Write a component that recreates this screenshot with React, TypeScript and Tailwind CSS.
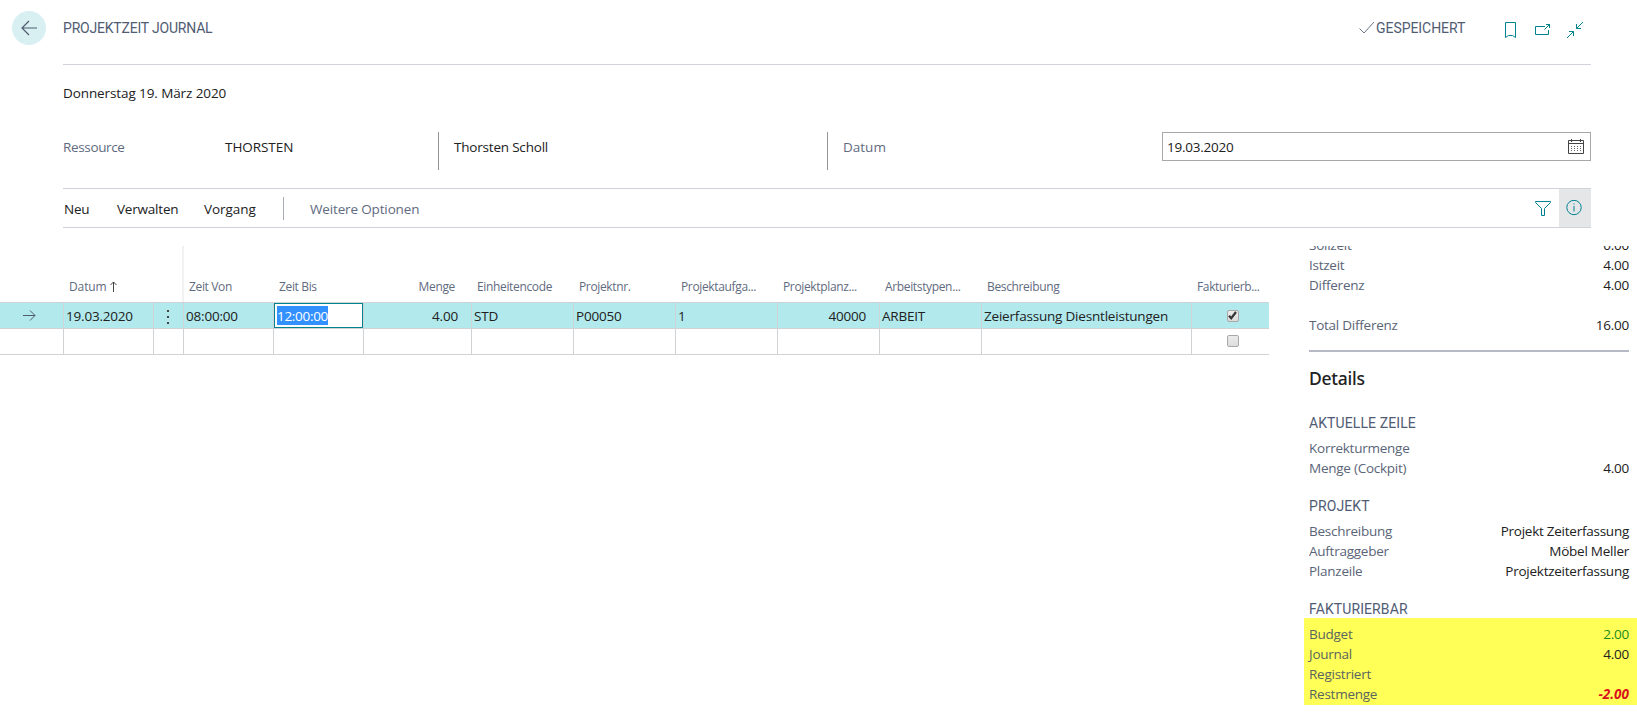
import clsx from "clsx";

const actions = [
  { t: "Neu", c: "w-[53px]" },
  { t: "Verwalten", c: "w-[87px]" },
  { t: "Vorgang", c: "w-[79px] tracking-[-0.05px]" },
];

const columns = [
  { t: "Zeit Von", v: "08:00:00", w: "w-[90px]" },
  { t: "Zeit Bis", v: "12:00:00", w: "w-[90px]", active: true },
  { t: "Menge", v: "4.00", w: "w-[108px]", right: true },
  { t: "Einheitencode", v: "STD", w: "w-[102px]" },
  { t: "Projektnr.", v: "P00050", w: "w-[102px]" },
  { t: "Projektaufga...", v: "1", w: "w-[102px]" },
  { t: "Projektplanz...", v: "40000", w: "w-[102px]", right: true },
  { t: "Arbeitstypen...", v: "ARBEIT", w: "w-[102px]" },
  { t: "Beschreibung", v: "Zeierfassung Diesntleistungen", w: "w-[210px]" },
];

function Header() {
  return (
    <header className="flex h-[65px] pl-3 pr-[46px]">
      <button className="mt-[11px] mr-[17px] flex size-[34px] shrink-0 items-center justify-center rounded-full bg-[#d9f0f2]">
        <svg width="16" height="16" viewBox="0 0 16 16" fill="none" stroke="#505c6d" strokeWidth="1.2">
          <path d="M16 8H1M8 1L1 8l7 7" />
        </svg>
      </button>
      <div className="flex grow border-b border-[#d0d3d9]">
        <h1 className="mt-[18px] font-[Roboto] text-sm leading-5 font-normal tracking-[-0.2px] text-[#505c73]">PROJEKTZEIT JOURNAL</h1>
        <div className="ml-auto flex">
          <svg className="mt-[21px]" width="16" height="14" viewBox="0 0 16 14" fill="none" stroke="#6b7587">
            <path d="M.5 7.500l4.500 4.500L15 1" />
          </svg>
          <span className="mt-[18px] ml-[1px] w-[129px] font-[Roboto] text-sm leading-5 font-normal tracking-[-0.05px] text-[#505c73]">GESPEICHERT</span>
          <svg className="mt-[22px] mr-[19px]" width="11" height="16" viewBox="0 0 11 16" fill="none" stroke="#00838f">
            <path d="M.5.5h10v15l-3-2h-4l-3 2z" />
          </svg>
          <svg className="mt-[23px] mr-[16px]" width="16" height="13" viewBox="0 0 16 13" fill="none" stroke="#00838f">
            <path d="M10 3.500H.5v8h13V7M9.500 6.500l5.500-5.500M11 1.500h3.500V5" />
          </svg>
          <svg className="mt-[22px] mr-[8px]" width="16" height="16" viewBox="0 0 16 16" fill="none" stroke="#00838f">
            <path d="M0 16l6.500-6.500M2 9.500h4.500V14M16 0L9.500 6.500M9.500 2v4.500H14" />
          </svg>
        </div>
      </div>
    </header>
  );
}

function Fields() {
  return (
    <section className="mx-[63px] mr-[46px] h-[123px]">
      <div className="pt-[18px] leading-5 tracking-[-0.1px]">Donnerstag 19. März 2020</div>
      <div className="mt-[29px] flex h-[38px] leading-[31px]">
        <div className="w-[162px] tracking-[-0.35px] text-[#5f6b80]">Ressource</div>
        <div className="w-[213px] tracking-[-0.05px]">THORSTEN</div>
        <div className="w-[389px] border-l border-[#939598] pl-[15px]">Thorsten Scholl</div>
        <div className="w-[335px] border-l border-[#939598] pl-[15px] tracking-normal text-[#5f6b80]">Datum</div>
        <div className="flex h-[29px] grow items-center border border-[#a6a8ab] pr-[6px] pl-[4px] leading-[27px]">
          <span className="mt-[2px] grow tracking-[-0.25px]">19.03.2020</span>
          <svg width="16" height="15" viewBox="0 0 16 15" fill="none" stroke="#444">
            <path d="M.5 1.500h15v13H.5zM.5 4.500h15M3.500 0v3M12.500 0v3" />
            <path d="M3 7.500h10M3 9.500h10M3 11.500h10" strokeDasharray="1 2" stroke="#666" />
          </svg>
        </div>
      </div>
    </section>
  );
}

function Toolbar() {
  return (
    <nav className="mr-[46px] ml-[63px] flex h-10 items-center border-y border-[#d0d3d9] pl-[1px]">
      {actions.map((a) => (
        <button key={a.t} className={clsx("mt-[3px] text-left", a.c)}>{a.t}</button>
      ))}
      <div className="mt-px mr-[26px] h-[23px] w-px bg-[#a6abb5]" />
      <button className="mt-[3px] tracking-[-0.15px] text-[#5f6b80]">Weitere Optionen</button>
      <svg className="mr-[8px] ml-auto" width="16" height="15" viewBox="0 0 16 15" fill="none" stroke="#00838f">
        <path d="M.5.5h15v1L9.500 7.500v7h-3v-7L.5 1.500z" />
      </svg>
      <div className="flex h-[38px] w-8 items-center justify-center bg-[#e4e6e8] pr-[2px]">
        <svg width="16" height="16" viewBox="0 0 16 16" fill="none" stroke="#00838f">
          <circle cx="8" cy="7.500" r="7.200" />
          <path d="M8 6V11.500M8 3.500v1" />
        </svg>
      </div>
    </nav>
  );
}

function Box({ checked }: { checked?: boolean }) {
  return (
    <span className="flex size-3 items-center justify-center rounded-[2px] border border-[#a8a8a8] bg-gradient-to-b from-[#ececec] to-[#dcdcdc]">
      {checked && (
        <svg width="9" height="9" viewBox="0 0 9 9" fill="none" stroke="#333" strokeWidth="2.200">
          <path d="M1 4.800l2.200 2.400L8 1" />
        </svg>
      )}
    </span>
  );
}

function Lines() {
  return (
    <div className="w-[1269px] shrink-0">
      <div className="flex h-14 text-[12px] tracking-[-0.35px] text-[#5f6b80]">
        <div className="flex w-[184px] items-end border-r-2 border-[#f2f2f2] pb-[5px] pl-[69px] leading-5 tracking-[-0.1px]">
          Datum
          <svg className="mb-[5px] ml-[3px]" width="7" height="11" viewBox="0 0 7 11" fill="none" stroke="#444">
            <path d="M3.500 11V1M.5 4l3-3 3 3" />
          </svg>
        </div>
        {columns.map((c) => (
          <div key={c.t} className={clsx("flex items-end pb-[5px] pl-[5px] leading-5 whitespace-nowrap", c.w, c.t === "Menge" && "justify-end pr-[17px]")}>
            {c.t}
          </div>
        ))}
        <div className="flex grow items-end pb-[5px] pl-[5px] leading-5">Fakturierb...</div>
      </div>
      <div className="flex h-[27px] border-y border-[#d0d3d6] bg-[#b2e9ec] leading-[26px]">
        <div className="flex w-[63px] items-center pl-[23px]">
          <svg width="13" height="11" viewBox="0 0 13 11" fill="none" stroke="#505c6d">
            <path d="M0 5.500h12M7 .5l5 5-5 5" />
          </svg>
        </div>
        <div className="w-[90px] border-l border-[#d0d3d6] pl-[2px]">19.03.2020</div>
        <div className="flex w-[30px] flex-col items-center justify-center gap-[4px] border-l border-[#d0d3d6] pt-[3px] pr-px">
          <i className="size-[2px] bg-[#444]" />
          <i className="size-[2px] bg-[#444]" />
          <i className="size-[2px] bg-[#444]" />
        </div>
        {columns.map((c) => (
          <div
            key={c.t}
            className={clsx("flex border-l border-[#d0d3d6] whitespace-nowrap", c.w, c.right && "justify-end pr-[13px]", !c.active && !c.right && "pl-[2px]")}
          >
            {c.active ? (
              <div className="flex grow items-center border border-[#00838f] bg-white pl-[2px]">
                <span className="h-[19px] bg-[#3390ff] leading-[20px] tracking-[-0.3px] text-white">{c.v}</span>
              </div>
            ) : (
              c.v
            )}
          </div>
        ))}
        <div className="flex grow items-center justify-center border-l border-[#d0d3d6] pl-1">
          <Box checked />
        </div>
      </div>
      <div className="flex h-[26px] border-b border-[#d0d3d6]">
        <div className="w-[63px]" />
        <div className="w-[90px] border-l border-[#d0d3d6]" />
        <div className="w-[30px] border-l border-[#d0d3d6]" />
        {columns.map((c) => (
          <div key={c.t} className={clsx("border-l border-[#d0d3d6]", c.w)} />
        ))}
        <div className="flex grow items-center justify-center border-l border-[#d0d3d6] pb-px pl-1">
          <Box />
        </div>
      </div>
    </div>
  );
}

function Row({ label, value, tone }: { label: string; value?: string; tone?: string }) {
  return (
    <div className="flex h-5 justify-between leading-5">
      <span className="opacity-85">{label}</span>
      <span className={tone ?? "text-[#212121]"}>{value}</span>
    </div>
  );
}

function Caption({ children }: { children: string }) {
  return <h3 className="h-5 font-[Roboto] text-sm leading-5 font-normal tracking-[0.1px] text-[#505c73]">{children}</h3>;
}

function FactBox() {
  return (
    <aside className="ml-[35px] h-[468px] w-[333px] overflow-hidden pr-2 pl-[5px] tracking-[-0.25px] text-[#3c4961]">
      <div className="-mt-[11px] h-[117px] border-b-2 border-[#b5bac4]">
        <Row label="Sollzeit" value="0.00" />
        <Row label="Istzeit" value="4.00" />
        <Row label="Differenz" value="4.00" />
        <div className="h-5" />
        <Row label="Total Differenz" value="16.00" />
      </div>
      <h2 className="mt-[12px] font-['Noto_Sans',sans-serif] text-[17.5px] leading-7 font-medium text-[#212121]">Details</h2>
      <div className="mt-[21px]">
        <Caption>AKTUELLE ZEILE</Caption>
      </div>
      <div className="mt-[5px]">
        <Row label="Korrekturmenge" />
        <Row label="Menge (Cockpit)" value="4.00" />
      </div>
      <div className="mt-[18px]">
        <Caption>PROJEKT</Caption>
      </div>
      <div className="mt-[5px]">
        <Row label="Beschreibung" value="Projekt Zeiterfassung" />
        <Row label="Auftraggeber" value="Möbel Meller" />
        <Row label="Planzeile" value="Projektzeiterfassung" />
      </div>
      <div className="mt-[18px]">
        <Caption>FAKTURIERBAR</Caption>
      </div>
      <div className="-mt-px -mr-2 -ml-[5px] h-[87px] bg-[#ffff57] pt-[6px] pr-2 pl-[5px]">
        <Row label="Budget" value="2.00" tone="text-[#1a8a1a]" />
        <Row label="Journal" value="4.00" />
        <Row label="Registriert" />
        <Row label="Restmenge" value="-2.00" tone="font-bold italic text-[#d8121a] tracking-normal" />
      </div>
    </aside>
  );
}

export default function App() {
  return (
    <div className="h-[714px] w-[1637px] overflow-hidden bg-white font-['Open_Sans',sans-serif] text-[13.5px] tracking-[-0.2px] text-[#212121]">
      <Header />
      <Fields />
      <Toolbar />
      <main className="mt-[18px] flex">
        <Lines />
        <FactBox />
      </main>
    </div>
  );
}
